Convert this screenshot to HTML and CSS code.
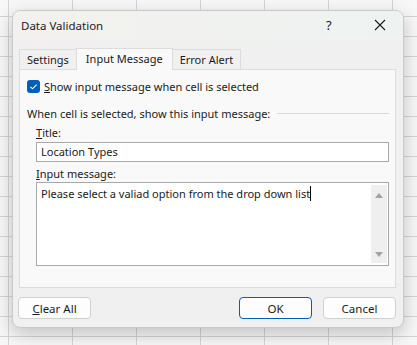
FILE: index.html
```html
<!DOCTYPE html>
<html lang="en">
<head>
    <meta charset="UTF-8" />
    <title>Data Validation</title>
    <link rel="stylesheet" href="styles.css">
</head>
<body>
    <div class="dialog">
        <div class="titlebar">
            <span class="title">Data Validation</span>
            <span class="help">?</span>
            <svg class="close" width="12" height="12" viewBox="0 0 12 12">
                <path d="M1 1 L11 11 M11 1 L1 11" stroke="#1b1b1b" stroke-width="1.1" fill="none" />
            </svg>
        </div>

        <!-- Tabs -->
        <div class="tabs">
            <div class="tab">Settings</div>
            <div class="tab active">Input Message</div>
            <div class="tab">Error Alert</div>
        </div>

        <div class="panel">
            <div class="check-row">
                <span class="checkbox">
                    <svg width="13" height="13" viewBox="0 0 13 13">
                        <path d="M3.5 6.8 L5.6 8.8 L9.6 4.6" stroke="#fff" stroke-width="1.1" fill="none" />
                    </svg>
                </span>
                <span><u>S</u>how input message when cell is selected</span>
            </div>

            <div class="group-heading">
                <span>When cell is selected, show this input message:</span>
                <div class="rule"></div>
            </div>

            <div class="field">
                <div class="field-label"><u>T</u>itle:</div>
                <div class="textbox">Location Types</div>
            </div>

            <div class="field">
                <div class="field-label"><u>I</u>nput message:</div>
                <div class="textarea">
                    <div class="textarea-text">Please select a valiad option from the drop down list<span class="caret"></span></div>
                    <div class="scrollbar">
                        <span class="arrow up"></span>
                        <span class="arrow down"></span>
                    </div>
                </div>
            </div>
        </div>

        <div class="footer">
            <button class="btn"><u>C</u>lear All</button>
            <div class="spacer"></div>
            <button class="btn primary">OK</button>
            <button class="btn">Cancel</button>
        </div>
    </div>
</body>
</html>
```

FILE: styles.css
```css
body {
    margin: 0;
    height: 345px;
    overflow: hidden;
    font-family: "Noto Sans", "Open Sans", sans-serif;
    font-size: 11px;
    color: #1b1b1b;
    background-color: #f7f7f7;
    background-image:
        linear-gradient(to right, #d4d4d4 1px, transparent 1px),
        linear-gradient(to bottom, #d4d4d4 1px, transparent 1px);
    background-size: 64px 20px;
    background-position: 8px 16px;
    padding-top: 10px;
    box-sizing: border-box;
}
.dialog {
    margin-left: 12px;
    width: 392px;
    height: 318px;
    box-sizing: border-box;
    background: #f0f0f0;
    border: 1px solid #c9c9c9;
    border-radius: 8px;
    box-shadow: 0 6px 18px rgba(0, 0, 0, 0.22);
    display: flex;
    flex-direction: column;
    overflow: hidden;
}
.titlebar {
    height: 30px;
    display: flex;
    align-items: center;
    padding-left: 8px;
    font-size: 11.5px;
    background: linear-gradient(to right, #f3f1ee, #eef3f1);
}
.title {
    flex: 1;
    margin-top: -2px;
}
.help {
    width: 12px;
    margin-right: 36px;
    font-size: 13px;
    margin-top: -2px;
}
.close {
    margin-right: 17px;
    margin-top: -3px;
}
.tabs {
    display: flex;
    align-items: flex-end;
    height: 28px;
    padding-left: 6px;
    position: relative;
    z-index: 1;
}
.tab {
    height: 19px;
    line-height: 20px;
    padding: 0 7px;
    background: #f0f0f0;
    border: 1px solid #dcdcdc;
    border-bottom: none;
    box-sizing: content-box;
}
.tab + .tab {
    margin-left: -1px;
}
.tab.active {
    height: 21px;
    line-height: 20px;
    padding: 0 9px;
    background: #f9f9f9;
    margin-bottom: -1px;
}
.panel {
    margin: 0 7px 0 6px;
    height: 219px;
    box-sizing: border-box;
    background: #f9f9f9;
    border: 1px solid #dcdcdc;
    padding: 10px 6px 0 7px;
}
.check-row {
    display: flex;
    align-items: center;
    height: 13px;
    gap: 4px;
}
.checkbox {
    width: 13px;
    height: 13px;
    background: #005fb8;
    border-radius: 3px;
    display: flex;
}
.group-heading {
    display: flex;
    align-items: center;
    margin-top: 12px;
    height: 16px;
}
.rule {
    flex: 1;
    height: 1px;
    background: #d8d8d8;
    margin-left: 7px;
    margin-top: 1px;
}
.field {
    margin-left: 9px;
}
.field-label {
    height: 16px;
    line-height: 16px;
    margin-top: 4px;
    margin-bottom: 1px;
}
.textbox {
    width: 353px;
    height: 20px;
    box-sizing: border-box;
    border: 1px solid #a9a9a9;
    background: #fff;
    line-height: 18px;
    padding-left: 4px;
}
.textarea {
    width: 353px;
    height: 84px;
    box-sizing: border-box;
    border: 1px solid #a9a9a9;
    background: #fff;
    display: flex;
    margin-top: -1px;
}
.textarea-text {
    flex: 1;
    padding: 2px 0 0 4px;
    line-height: 17px;
}
.caret {
    display: inline-block;
    width: 1px;
    height: 15px;
    background: #000;
    vertical-align: -3px;
}
.scrollbar {
    width: 16px;
    margin: 2px 1px 2px 0;
    background: #efefef;
    display: flex;
    flex-direction: column;
    justify-content: space-between;
    align-items: center;
    padding: 8px 0 6px;
    box-sizing: border-box;
}
.arrow {
    width: 0;
    height: 0;
    border-left: 4px solid transparent;
    border-right: 4px solid transparent;
}
.arrow.up {
    border-bottom: 5px solid #a3a3a3;
}
.arrow.down {
    border-top: 5px solid #a3a3a3;
}
.footer {
    display: flex;
    padding: 9px 7px 0 5px;
    gap: 11px;
}
.spacer {
    flex: 1;
}
.btn {
    width: 73px;
    height: 22px;
    font-family: inherit;
    font-size: 11.5px;
    color: #1b1b1b;
    background: #fdfdfd;
    border: 1px solid #d0d0d0;
    border-radius: 4px;
    padding: 0;
}
.btn.primary {
    border-color: #005fb8;
}
```
